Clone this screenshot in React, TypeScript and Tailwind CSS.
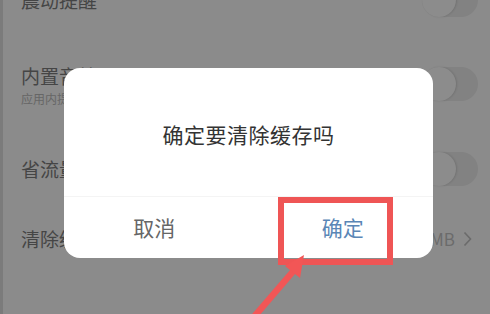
import React from "react";

const font = { fontFamily: '"Noto Sans CJK SC", "Noto Sans", sans-serif' };

function Toggle() {
  return (
    <div className="relative h-[34px] w-[56px] rounded-full bg-[#828282]">
      <div className="absolute left-0 top-0 h-[34px] w-[34px] rounded-full bg-[#8c8c8c] shadow-[1px_0_2px_rgba(0,0,0,0.12)]" />
    </div>
  );
}

export default function App() {
  return (
    <div
      className="relative h-[314px] w-[490px] overflow-hidden bg-[#8b8b8b] border-l-[3px] border-[#7b7b7b]"
      style={font}
    >
      {/* settings list (dimmed) */}
      <div className="-mt-[40px] flex flex-col pl-[18px] pr-[12px]">
        <div className="flex h-[80px] items-center justify-between">
          <span className="text-[19px] text-[#454545]">震动提醒</span>
          <Toggle />
        </div>
        <div className="flex h-[88px] items-center justify-between">
          <div className="flex flex-col">
            <span className="text-[19px] leading-[26px] text-[#454545]">内置音效</span>
            <span className="mt-[3px] text-[12px] leading-[14px] text-[#666]">应用内提示音</span>
          </div>
          <Toggle />
        </div>
        <div className="flex h-[82px] items-center justify-between">
          <span className="text-[19px] text-[#454545]">省流量模式</span>
          <Toggle />
        </div>
        <div className="flex h-[58px] items-center justify-between">
          <span className="text-[19px] text-[#454545]">清除缓存</span>
          <span className="flex items-center gap-[8px] pr-[6px] text-[17px] text-[#6b6b6b]">
            12.5MB
            <svg width="9" height="16" viewBox="0 0 9 16" fill="none">
              <path d="M1.5 1.5 L7.5 8 L1.5 14.5" stroke="#6b6b6b" strokeWidth="1.6" />
            </svg>
          </span>
        </div>
      </div>

      {/* dialog */}
      <div className="absolute left-[61px] top-[68px] flex h-[190px] w-[369px] flex-col rounded-[16px] bg-white">
        <div className="flex h-[128px] items-center justify-center pt-[6px]">
          <span className="text-[21px] tracking-[0.5px] text-[#333]">确定要清除缓存吗</span>
        </div>
        <div className="flex flex-1 border-t border-[#f4f4f4]">
          <div className="flex flex-1 items-center justify-center pr-[4px] text-[21px] text-[#666]">取消</div>
          <div className="flex flex-1 items-center justify-center pl-[4px] text-[21px] text-[#5a86b6]">确定</div>
        </div>
      </div>

      {/* annotation */}
      <div className="absolute left-[275px] top-[197px] h-[68px] w-[115px] border-[6px] border-[#ef5555]" />
      <svg className="absolute left-0 top-0" width="490" height="314" viewBox="0 0 490 314">
        <line x1="250" y1="318" x2="293" y2="268" stroke="#f25656" strokeWidth="6.5" />
        <polygon points="301,255 282,266 297,278" fill="#f25656" />
      </svg>
    </div>
  );
}
